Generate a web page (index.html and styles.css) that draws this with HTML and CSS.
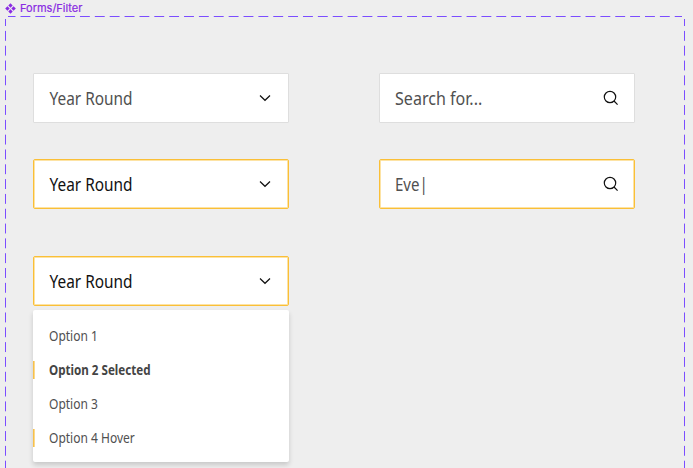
FILE: index.html
```html
<!DOCTYPE html>
<html lang="en">
<head>
<meta charset="utf-8">
<title>Forms/Filter</title>
<link rel="stylesheet" href="styles.css">
</head>
<body>
<header class="title">
  <svg class="mark" viewBox="0 0 12 12"><path d="M6 .2 8.4 2.7 6 5.1 3.6 2.7zM6 6.9l2.4 2.4L6 11.8 3.6 9.3zM2.7 3.6 5.1 6 2.7 8.4.2 6zM9.3 3.6 11.8 6 9.3 8.4 6.9 6z"/></svg>
  <span class="title-text">Forms/Filter</span>
</header>
<svg class="outline" width="693" height="468">
  <path class="side" d="M5.5 19V468"/>
  <path class="top" d="M8 16.5H682"/>
  <path class="side" d="M684.5 19V468"/>
</svg>
<main class="board">
  <section class="column">
    <div class="field"><span class="value year">Year Round</span><svg class="chevron" viewBox="0 0 12 8"><path d="M1 1.5 6 6.3 11 1.5"/></svg></div>
    <div class="field active dark"><span class="value year">Year Round</span><svg class="chevron" viewBox="0 0 12 8"><path d="M1 1.5 6 6.3 11 1.5"/></svg></div>
    <div class="field active dark open"><span class="value year">Year Round</span><svg class="chevron" viewBox="0 0 12 8"><path d="M1 1.5 6 6.3 11 1.5"/></svg></div>
    <ul class="menu">
      <li><span>Option 1</span></li>
      <li class="marked selected"><span>Option 2 Selected</span></li>
      <li><span>Option 3</span></li>
      <li class="marked"><span>Option 4 Hover</span></li>
    </ul>
  </section>
  <section class="column">
    <div class="field"><span class="value search">Search for...</span><svg class="glass" viewBox="0 0 16 16"><circle cx="7" cy="7" r="5.7"/><path d="m11 11 3.6 3.6"/></svg></div>
    <div class="field active"><span class="value typed">Eve|</span><svg class="glass" viewBox="0 0 16 16"><circle cx="7" cy="7" r="5.7"/><path d="m11 11 3.6 3.6"/></svg></div>
  </section>
</main>
</body>
</html>
```
FILE: styles.css
```css
* { box-sizing: border-box; }
body {
  margin: 0;
  width: 693px;
  height: 468px;
  overflow: hidden;
  position: relative;
  background: #eee;
  font-family: "Noto Sans", sans-serif;
  color: #505050;
}
.title {
  display: flex;
  align-items: center;
  height: 16px;
  padding-left: 5px;
  gap: 4px;
  color: #8a2be2;
  font: 11px/16px Inter, sans-serif;
}
.mark { width: 11px; height: 11px; fill: currentColor; }
.title-text { -webkit-text-stroke: 0.2px currentColor; }
.outline {
  position: absolute;
  left: 0;
  top: 0;
  fill: none;
  stroke: #7b4dff;
  stroke-width: 1;
}
.top { stroke-dasharray: 9.9 4.97; stroke-dashoffset: 2.4; }
.side { stroke-dasharray: 9.9 4.92; stroke-dashoffset: 2.9; }
.board { display: flex; gap: 90px; padding: 57px 0 0 33px; }
.column { width: 256px; }
.field {
  display: flex;
  align-items: center;
  justify-content: space-between;
  height: 50px;
  margin-bottom: 36px;
  padding: 0 17px 0 15px;
  background: #fff;
  border: 1px solid #dedede;
  border-radius: 1px;
}
.active {
  border-color: #fabf37;
  box-shadow: inset 0 0 0 1px #fde3a4;
  border-radius: 2px;
}
.dark { color: #111; }
.open { margin: 47px 0 4px; }
.value {
  font-size: 17.5px;
  line-height: 24px;
  white-space: nowrap;
  transform-origin: left;
}
.year { transform: translateX(0.5px) scaleX(0.88); }
.search { transform: scaleX(0.918); }
.typed { transform: scaleX(0.86); }
.chevron { width: 12px; height: 8px; }
.glass { width: 16px; height: 16px; margin-right: -2px; }
.chevron, .glass { fill: none; stroke: #111; stroke-width: 1.2; }
.menu {
  margin: 0;
  padding: 9px 0;
  height: 152px;
  list-style: none;
  background: #fff;
  border-radius: 2px;
  box-shadow: 0 3px 5px rgba(0, 0, 0, 0.16);
}
.menu li {
  display: flex;
  align-items: center;
  height: 34px;
  font-size: 13.5px;
}
.menu li::before { content: ""; width: 2px; height: 18px; margin-right: 14px; }
.menu .marked::before { background: linear-gradient(90deg, #f7c04a 50%, #fbd98d 50%); }
.menu span { transform: scaleX(0.89); transform-origin: left; white-space: nowrap; }
.menu .selected { color: #444; font-weight: 700; }
.menu .selected span { transform: scaleX(0.86); }
```
